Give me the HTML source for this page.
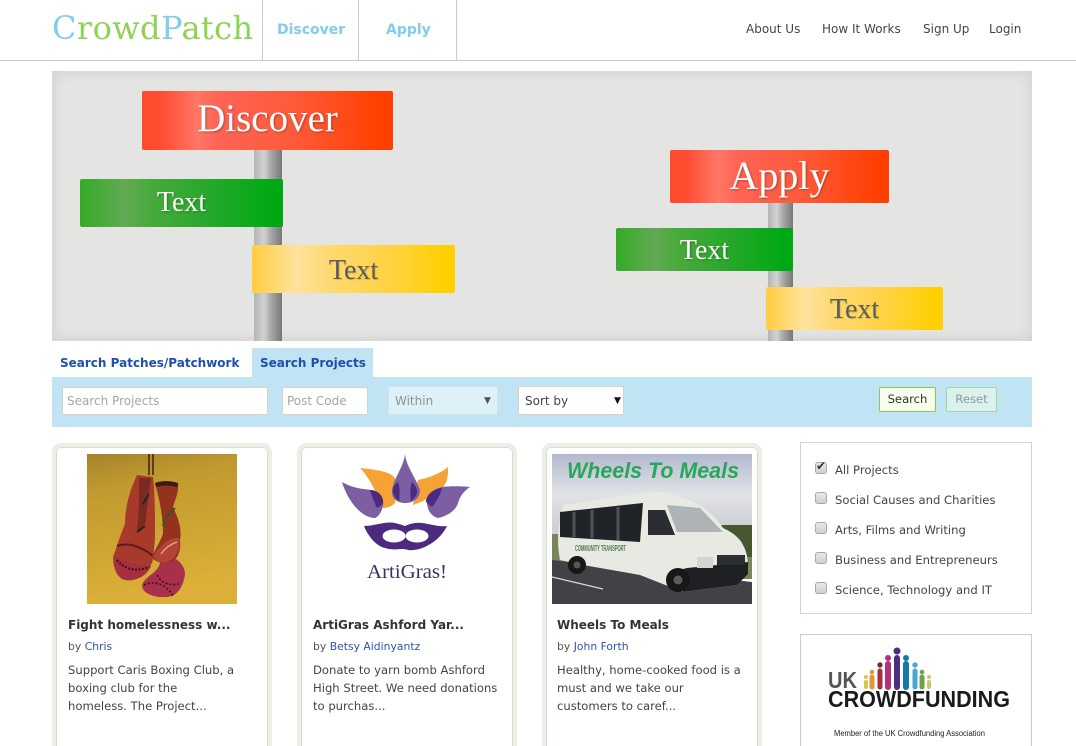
<!DOCTYPE html>
<html><head><meta charset="utf-8"><title>CrowdPatch</title>
<style>
html,body{margin:0;padding:0;background:#fff;width:1076px;height:746px;overflow:hidden}
#w{position:absolute;left:0;top:0;width:1076px;height:746px;overflow:hidden;font-family:"DejaVu Sans","Liberation Sans",sans-serif;font-size:11.6px;color:#333}
.a{position:absolute;white-space:nowrap}
.sign{position:absolute;border-radius:2px;font-family:"Liberation Serif",serif;text-align:center;color:#fff;text-shadow:1px 1px 2px rgba(0,0,0,.3)}
.red{background:linear-gradient(90deg,#ff4a2c 0,#ff4d33 8%,#ff7766 22%,#ff6455 30%,#ff5a3a 60%,#ff3f00 95%)}
.green{background:linear-gradient(90deg,#35ab28 0,#62a953 22%,#48aa3c 35%,#25a82b 65%,#00a913 95%)}
.yellow{background:linear-gradient(90deg,#ffcd40 0,#ffe39c 22%,#ffd972 38%,#ffd23f 70%,#ffd000 95%);color:#5c5c5c;text-shadow:1px 1px 1px rgba(0,0,0,.15)}
.pole{position:absolute;background:linear-gradient(90deg,#b4b4b4,#d2d2d2 35%,#a8a8a8 60%,#777 100%)}
.inp{position:absolute;box-sizing:border-box;background:#fff;border:1px solid #d3d3c8;height:28px;line-height:26px;padding-left:4px;color:#a5a5a5;font-size:12px}
.card{position:absolute;top:443px;width:220px;height:320px;box-sizing:border-box;border:4px solid #ecefe7;border-radius:9px;background:#fff;box-shadow:inset 0 0 0 1px #d9dcd2}
.t{position:absolute;left:68px;white-space:nowrap}
.title{font-weight:bold;font-size:12px;color:#333;top:618px}
.by{font-size:10.8px;color:#555;top:640px}
.by span{color:#2d55a8}
.desc{line-height:18px;top:661px;color:#444}
.cb{position:absolute;left:815px;width:10px;height:10px;border:1px solid #a8a8a8;border-radius:3px;background:linear-gradient(#e8e8e8,#d0d0d0)}
.cl{position:absolute;left:835px;white-space:nowrap;color:#444}
</style></head><body><div id="w">

<!-- header -->
<div class="a" style="left:0;top:60px;width:1076px;height:1px;background:#ccc"></div>
<div class="a" style="left:262px;top:0;width:1px;height:60px;background:#ccc"></div>
<div class="a" style="left:358px;top:0;width:1px;height:60px;background:#ccc"></div>
<div class="a" style="left:456px;top:0;width:1px;height:60px;background:#ccc"></div>
<div class="a" style="left:52px;top:8px;font-family:'DejaVu Serif',serif;font-size:32px;line-height:40px;color:#8ed354;letter-spacing:.4px"><span style="color:#82cdea">C</span>rowd<span style="color:#82cdea">P</span>atch</div>
<div class="a" style="left:277px;top:22px;font-weight:bold;font-size:14px;color:#82cdea">Discover</div>
<div class="a" style="left:386px;top:22px;font-weight:bold;font-size:14px;color:#82cdea">Apply</div>
<div class="a" style="left:746px;top:22px;color:#444;font-size:12px">About Us</div>
<div class="a" style="left:822px;top:22px;color:#444;font-size:12px">How It Works</div>
<div class="a" style="left:923px;top:22px;color:#444;font-size:12px">Sign Up</div>
<div class="a" style="left:989px;top:22px;color:#444;font-size:12px">Login</div>

<!-- hero -->
<div class="a" style="left:52px;top:71px;width:980px;height:270px;background:#e4e4e2;box-shadow:inset 0 0 14px rgba(0,0,0,.1)"></div>
<div class="pole" style="left:254px;top:150px;width:28px;height:191px"></div>
<div class="pole" style="left:768px;top:203px;width:25px;height:138px"></div>
<div class="sign red" style="left:142px;top:91px;width:251px;height:59px;font-size:39px;line-height:55px">Discover</div>
<div class="sign green" style="left:80px;top:179px;width:203px;height:48px;font-size:28px;line-height:47px">Text</div>
<div class="sign yellow" style="left:252px;top:245px;width:203px;height:48px;font-size:28px;line-height:52px">Text</div>
<div class="sign red" style="left:670px;top:150px;width:219px;height:53px;font-size:40px;line-height:52px">Apply</div>
<div class="sign green" style="left:616px;top:228px;width:177px;height:43px;font-size:28px;line-height:46px">Text</div>
<div class="sign yellow" style="left:766px;top:287px;width:177px;height:43px;font-size:28px;line-height:45px">Text</div>

<!-- tabs -->
<div class="a" style="left:252px;top:348px;width:121px;height:29px;background:#c0e4f3"></div>
<div class="a" style="left:60px;top:356px;font-weight:bold;font-size:12px;color:#1f4fae">Search Patches/Patchwork</div>
<div class="a" style="left:260px;top:356px;font-weight:bold;font-size:12px;color:#1f4fae">Search Projects</div>
<div class="a" style="left:52px;top:377px;width:980px;height:50px;background:#c0e4f3"></div>
<div class="inp" style="left:62px;top:387px;width:206px">Search Projects</div>
<div class="inp" style="left:282px;top:387px;width:86px">Post Code</div>
<div class="inp" style="left:388px;top:386px;width:110px;height:29px;line-height:28px;padding-left:6px;background:#def1f8;border-color:#cfe3ea;color:#8a9498">Within<span class="a" style="left:95px;top:0;font-size:9px;color:#555">▼</span></div>
<div class="inp" style="left:518px;top:386px;width:106px;height:29px;line-height:28px;padding-left:6px;color:#444">Sort by<span class="a" style="left:95px;top:0;font-size:9px;color:#111">▼</span></div>
<div class="a" style="left:879px;top:387px;width:57px;height:25px;box-sizing:border-box;border:1px solid #8ac84f;border-radius:2px;background:#f5ffec;text-align:center;line-height:22px;color:#333">Search</div>
<div class="a" style="left:946px;top:387px;width:51px;height:25px;box-sizing:border-box;border:1px solid #a4d89a;border-radius:2px;background:#dcf1ee;text-align:center;line-height:22px;color:#8a9a9a">Reset</div>

<!-- card 1 -->
<div class="card" style="left:52px"></div>
<svg class="a" style="left:87px;top:454px" width="150" height="150" viewBox="0 0 150 150">
<defs><linearGradient id="g" x1="0" y1="0" x2=".2" y2="1"><stop offset="0" stop-color="#a5832c"/><stop offset=".25" stop-color="#c19a2f"/><stop offset="1" stop-color="#dcb038"/></linearGradient></defs>
<rect width="150" height="150" fill="url(#g)"/>
<path d="M62 0V21M66 0V21" stroke="#3c2015" stroke-width="1.5"/>
<!-- lower right fist -->
<path d="M76 100C88 102 98 110 98 120C96 134 90 142 80 143C68 144 56 140 55 132C56 124 68 120 72 112Z" fill="#a8304a"/>
<path d="M57 131C66 126 80 130 86 142M70 121C74 128 80 132 92 130" stroke="#3a1212" stroke-width="1.6" fill="none" stroke-dasharray="2 2"/>
<!-- left glove -->
<path d="M50 21L66 23C68 40 68 60 68 84L66 106C62 118 52 126 38 126C30 124 26 114 26 103C31 90 32 84 38 70C38 50 44 34 50 21Z" fill="#a83a2c"/>
<path d="M52 24L64 24L58 70L50 78L52 50Z" fill="#7a2a1f"/>
<path d="M50 78L58 72M56 50L62 40" stroke="#1f2a18" stroke-width="2"/>
<path d="M28 102C40 110 54 112 64 112C60 122 48 128 38 126C30 124 26 114 28 102Z" fill="#a52f42"/>
<path d="M30 106C38 116 50 118 62 113" stroke="#401010" stroke-width="2" fill="none" stroke-dasharray="2 1.5"/>
<path d="M30 92C40 88 54 92 66 102" stroke="#5f1c16" stroke-width="2" fill="none"/>
<!-- right glove -->
<path d="M68 29C76 26 84 27 91 29C92 38 88 46 86 53C92 66 95 76 93 86C94 94 92 100 90 103C86 108 80 110 76 109C70 108 66 106 65 102C68 96 72 90 76 80C76 60 72 44 68 29Z" fill="#93321f"/>
<path d="M68 29C76 26 84 27 91 29L90 33C82 31 76 31 69 33Z" fill="#3c1a14"/>
<path d="M76 72C78 62 84 58 88 54" stroke="#2a5a2a" stroke-width="1.8" fill="none"/>
<path d="M66 102C74 90 84 82 92 84C94 96 88 106 78 109C72 108 68 106 66 102Z" fill="#b4423a"/>
<path d="M74 100C78 94 84 90 90 88" stroke="#f0b070" stroke-width="1.2" fill="none"/>
</svg>
<div class="t title">Fight homelessness w...</div>
<div class="t by">by <span>Chris</span></div>
<div class="t desc">Support Caris Boxing Club, a<br>boxing club for the<br>homeless. The Project...</div>

<!-- card 2 -->
<div class="card" style="left:297px"></div>
<svg class="a" style="left:332px;top:454px" width="150" height="150" viewBox="0 0 150 150">
<path d="M28 14C38 15 46 16 53 18C60 20 64 24 66 29L63 49C60 52 56 54 51 54C46 42 38 24 28 14Z" fill="#f6a235"/>
<path d="M116 13C116 18 116 22 115 26C112 36 96 46 81 51L86 26C96 24 108 20 116 13Z" fill="#f6a235"/>
<path d="M10 28C20 34 30 35 40 36C46 38 50 41 51 46C52 54 48 62 43 64C30 64 16 48 10 28Z" fill="#7c5ea3"/>
<path d="M138 33C128 32 118 32 110 33C102 35 96 39 95 44C94 54 98 62 106 64C116 62 124 56 126 49C128 42 132 37 138 33Z" fill="#7c5ea3"/>
<path d="M73 0C74 12 84 24 88 36C88 44 82 49 73 49C65 49 59 44 60 36C62 24 72 12 73 0Z" fill="#7c5ea3"/>
<path d="M66 28C60 32 58 40 67 47C68 40 68 34 66 28ZM80 28C86 34 88 40 79 47C78 40 78 34 80 28ZM38 36C46 36 52 42 51 50C49 52 47 53 45 54C42 48 40 42 38 36ZM110 34C104 34 94 40 94 48C96 50 99 52 100 53C104 48 108 42 110 34Z" fill="#4c2a7f"/>
<path d="M32 72C42 72 54 67 63 69C67 70 70 71 73 72C77 70 84 68 90 69C98 70 106 73 115 72C110 82 104 86 100 89C92 94 84 97 76 96C74 95 70 95 68 95C62 96 56 95 53 94C44 92 36 82 32 72Z" fill="#4c2a80"/>
<ellipse cx="62" cy="82" rx="11.5" ry="6.5" fill="#fff"/><ellipse cx="85" cy="82" rx="11.5" ry="6.5" fill="#fff"/>
<text x="35" y="124" font-family="Liberation Serif,serif" font-size="20" fill="#432e62" textLength="80" lengthAdjust="spacingAndGlyphs">ArtiGras!</text>
</svg>
<div class="t title" style="left:313px">ArtiGras Ashford Yar...</div>
<div class="t by" style="left:313px">by <span>Betsy Aidinyantz</span></div>
<div class="t desc" style="left:313px">Donate to yarn bomb Ashford<br>High Street. We need donations<br>to purchas...</div>

<!-- card 3 -->
<div class="card" style="left:542px"></div>
<svg class="a" style="left:552px;top:454px" width="200" height="150" viewBox="0 0 200 150">
<defs><linearGradient id="s" x1="0" y1="0" x2="0" y2="1"><stop offset="0" stop-color="#b4b8ce"/><stop offset=".4" stop-color="#e2e3e6"/><stop offset=".7" stop-color="#cfd1d6"/><stop offset="1" stop-color="#d0d2d6"/></linearGradient></defs>
<rect width="200" height="100" fill="url(#s)"/>
<rect y="80" width="200" height="45" fill="#79865a"/>
<rect x="165" y="71" width="35" height="32" fill="#46582f"/>
<path d="M0 106L200 128V150H0Z" fill="#404246"/>
<path d="M0 123L51 135" stroke="#d8d8d8" stroke-width="1.3"/>
<path d="M11 51L98 38C106 37 114 38 121 41C132 44 142 47 148 51C158 58 166 66 171 74C180 78 188 84 191 91C195 98 196 106 196 114L185 131L131 138L88 121L31 111L8 106C5 90 5 76 11 51Z" fill="#e8e9e3"/>
<path d="M8 58L91 49L88 88L8 83Z" fill="#202428"/>
<path d="M40 56V84M66 53V86M22 58V83" stroke="#4d5357" stroke-width="3"/>
<path d="M96 56L113 56L123 81L96 81Z" fill="#2a2e32"/>
<path d="M115 51L148 54L171 78L125 78Z" fill="#aeb3b6"/>
<path d="M135 114L196 108L196 120L185 131L131 138L120 118Z" fill="#1e2022"/>
<rect x="165" y="101" width="28" height="10" fill="#2b2f32"/>
<rect x="145" y="103" width="16" height="11" fill="#d2d4d2"/>
<circle cx="126" cy="126" r="12" fill="#171717"/><circle cx="126" cy="126" r="4.5" fill="#5b5b5b"/>
<circle cx="25" cy="111" r="9" fill="#171717"/><circle cx="25" cy="111" r="3.5" fill="#555"/>
<text x="23" y="97" font-family="Liberation Sans,sans-serif" font-size="8" font-weight="bold" fill="#4f7b4e" textLength="51" lengthAdjust="spacingAndGlyphs">COMMUNITY TRANSPORT</text>
<text x="15" y="24" font-family="Liberation Sans,sans-serif" font-size="22" font-weight="bold" font-style="italic" fill="#25a85a" textLength="172" lengthAdjust="spacingAndGlyphs">Wheels To Meals</text>
</svg>
<div class="t title" style="left:557px">Wheels To Meals</div>
<div class="t by" style="left:557px">by <span>John Forth</span></div>
<div class="t desc" style="left:557px">Healthy, home-cooked food is a<br>must and we take our<br>customers to caref...</div>

<!-- categories -->
<div class="a" style="left:800px;top:442px;width:232px;height:172px;box-sizing:border-box;border:1px solid #d3d3c8"></div>
<div class="cb" style="top:462px"></div>
<div class="a" style="left:816px;top:459px;font-size:12px;color:#333">✔</div>
<div class="cl" style="top:463px">All Projects</div>
<div class="cb" style="top:492px"></div><div class="cl" style="top:493px">Social Causes and Charities</div>
<div class="cb" style="top:522px"></div><div class="cl" style="top:523px">Arts, Films and Writing</div>
<div class="cb" style="top:552px"></div><div class="cl" style="top:553px">Business and Entrepreneurs</div>
<div class="cb" style="top:582px"></div><div class="cl" style="top:583px">Science, Technology and IT</div>

<!-- UK crowdfunding -->
<div class="a" style="left:800px;top:634px;width:232px;height:120px;box-sizing:border-box;border:1px solid #ccc"></div>
<svg class="a" style="left:820px;top:640px" width="200" height="106" viewBox="0 0 200 106">
<g stroke-linecap="round" fill="none">
<path d="M46 42V47" stroke="#d8c84a" stroke-width="4"/><path d="M52 37V47" stroke="#dd9a3a" stroke-width="5"/><path d="M60 31V47" stroke="#a92c3f" stroke-width="5"/>
<path d="M68 24V47" stroke="#b3307f" stroke-width="6"/><path d="M77 18V47" stroke="#4b2e83" stroke-width="6"/><path d="M86 24V47" stroke="#1578a8" stroke-width="6"/>
<path d="M95 31V47" stroke="#4da6cf" stroke-width="5"/><path d="M102 37V47" stroke="#6fa048" stroke-width="5"/><path d="M109 42V47" stroke="#c8c86a" stroke-width="4"/>
</g>
<circle cx="77" cy="11" r="3.5" fill="#4b2e83"/><circle cx="68" cy="18" r="3" fill="#b3307f"/><circle cx="86" cy="18" r="3" fill="#1578a8"/><circle cx="60" cy="25" r="2.7" fill="#7d2a3a"/><circle cx="95" cy="25" r="2.7" fill="#4da6cf"/><circle cx="52" cy="32" r="2.3" fill="#dd9a3a"/><circle cx="102" cy="32" r="2.3" fill="#6fa048"/><circle cx="46" cy="37" r="2" fill="#d8c84a"/><circle cx="109" cy="37" r="2" fill="#c8c86a"/>
<text x="8" y="48" font-family="Liberation Sans,sans-serif" font-size="23" font-weight="bold" fill="#555" textLength="29" lengthAdjust="spacingAndGlyphs">UK</text>
<text x="8" y="67" font-family="Liberation Sans,sans-serif" font-size="23" font-weight="bold" fill="#1a1a1a" textLength="182" lengthAdjust="spacingAndGlyphs">CROWDFUNDING</text>
<text x="14" y="96" font-family="Liberation Sans,sans-serif" font-size="8" fill="#222" textLength="151" lengthAdjust="spacingAndGlyphs">Member of the UK Crowdfunding Association</text>
</svg>
</div></body></html>
